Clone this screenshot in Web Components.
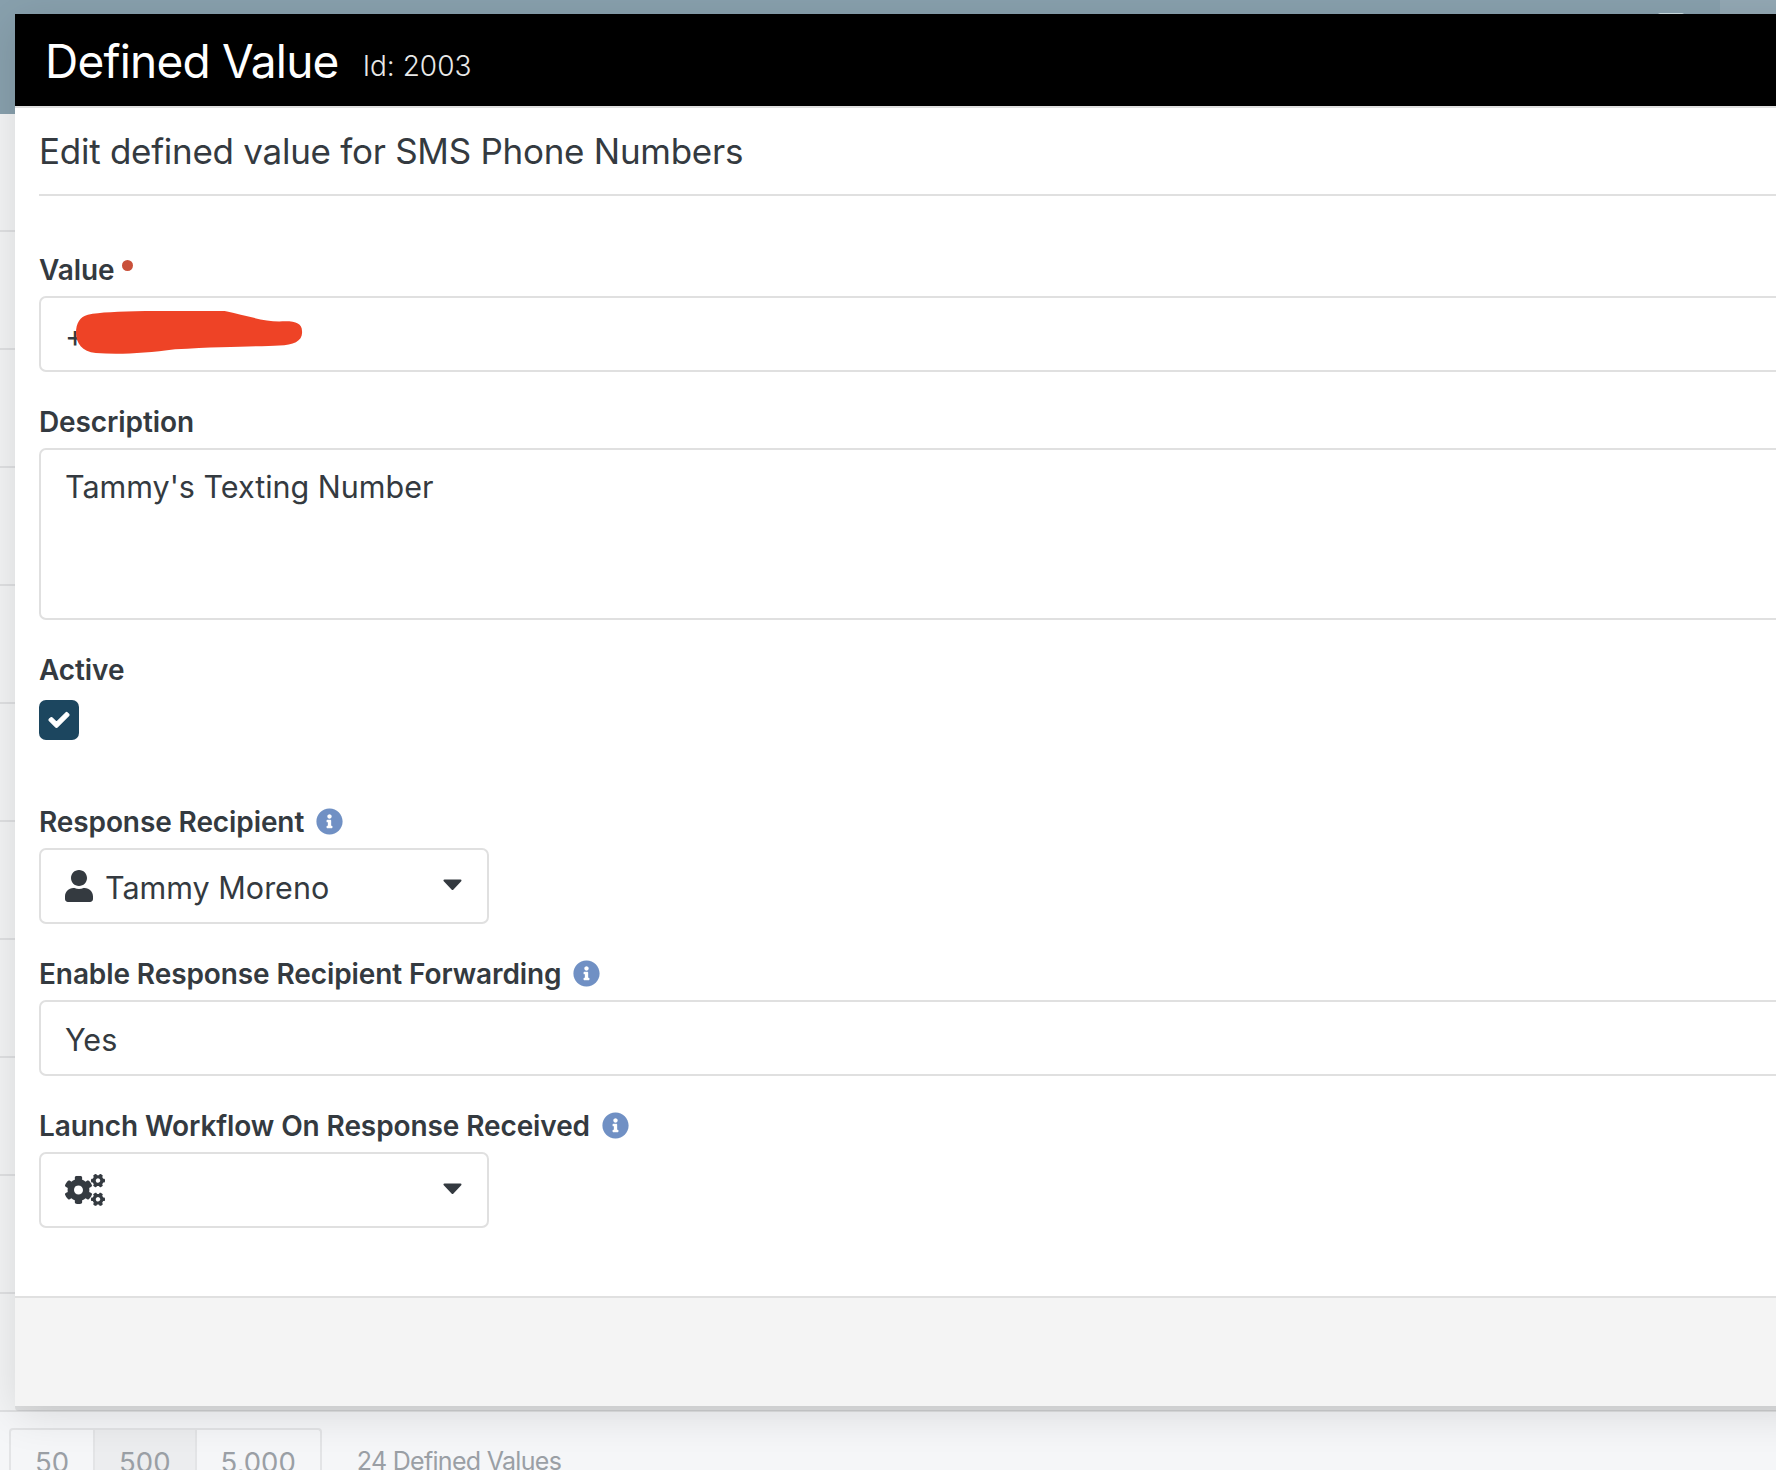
<!DOCTYPE html>
<html>
<head>
<meta charset="utf-8">
<title>Defined Value</title>
<style>
  html, body { margin: 0; padding: 0; background: #f5f6f8; }
  body { width: 1776px; height: 1470px; overflow: hidden; font-family: Inter, "Liberation Sans", sans-serif; color: #343a40; }
</style>
</head>
<body>
<list-backdrop>
  <modal-dialog heading="Defined Value" record-id="Id: 2003" subtitle="Edit defined value for SMS Phone Numbers">
    <form-field label="Value" required>
      <text-box class="redacted">+</text-box>
    </form-field>
    <form-field label="Description">
      <text-box multiline>Tammy's Texting Number</text-box>
    </form-field>
    <form-field label="Active" class="check-field">
      <check-box></check-box>
    </form-field>
    <form-field label="Response Recipient" info>
      <picker-box icon="user">Tammy Moreno</picker-box>
    </form-field>
    <form-field label="Enable Response Recipient Forwarding" info>
      <text-box>Yes</text-box>
    </form-field>
    <form-field label="Launch Workflow On Response Received" info>
      <picker-box icon="cogs"></picker-box>
    </form-field>
  </modal-dialog>
</list-backdrop>

<script>
const ICONS = {
  user: {
    box: "0 0 448 512",
    d: "M224 256c70.7 0 128-57.3 128-128S294.7 0 224 0 96 57.3 96 128s57.3 128 128 128zm89.6 32h-16.7c-22.2 10.2-46.9 16-72.9 16s-50.6-5.8-72.9-16h-16.7C60.2 288 0 348.2 0 422.4V464c0 26.5 21.5 48 48 48h352c26.5 0 48-21.5 48-48v-41.6c0-74.2-60.2-134.4-134.4-134.4z",
  },
  cogs: {
    box: "0 0 640 512",
    d: "M512.1 191l-8.2 14.3c-3 5.3-9.4 7.5-15.1 5.4-11.8-4.4-22.6-10.7-32.1-18.6-4.6-3.8-5.8-10.5-2.8-15.7l8.2-14.3c-6.9-8-12.3-17.3-15.9-27.4h-16.5c-6 0-11.2-4.3-12.2-10.3-2-12-2.1-24.6 0-37.1 1-6 6.2-10.4 12.2-10.4h16.5c3.6-10.1 9-19.4 15.9-27.4l-8.2-14.3c-3-5.2-1.9-11.9 2.8-15.7 9.5-7.9 20.4-14.2 32.1-18.6 5.7-2.1 12.1.1 15.1 5.4l8.2 14.3c10.5-1.9 21.2-1.9 31.7 0L552 6.3c3-5.3 9.4-7.5 15.1-5.4 11.8 4.4 22.6 10.7 32.1 18.6 4.6 3.8 5.8 10.5 2.8 15.7l-8.2 14.3c6.9 8 12.3 17.3 15.9 27.4h16.5c6 0 11.2 4.3 12.2 10.3 2 12 2.1 24.6 0 37.1-1 6-6.2 10.4-12.2 10.4h-16.5c-3.6 10.1-9 19.4-15.9 27.4l8.2 14.3c3 5.2 1.9 11.9-2.8 15.7-9.5 7.9-20.4 14.2-32.1 18.6-5.7 2.1-12.1-.1-15.1-5.4l-8.2-14.3c-10.4 1.9-21.2 1.9-31.7 0zm-10.5-58.8c38.5 29.6 82.4-14.3 52.8-52.8-38.5-29.7-82.4 14.3-52.8 52.8zM386.3 286.1l33.7 16.8c10.1 5.8 14.5 18.1 10.5 29.1-8.9 24.2-26.4 46.4-42.6 65.8-7.4 8.9-20.2 11.1-30.3 5.3l-29.1-16.8c-16 13.7-34.6 24.6-54.9 31.7v33.6c0 11.6-8.3 21.6-19.7 23.6-24.6 4.2-50.4 4.4-75.9 0-11.5-2-20-11.9-20-23.6V418c-20.3-7.2-38.9-18-54.9-31.7L74 403c-10 5.8-22.9 3.6-30.3-5.3-16.2-19.4-33.3-41.6-42.2-65.7-4-10.9.4-23.2 10.5-29.1l33.3-16.8c-3.9-20.9-3.9-42.4 0-63.4L12 205.8c-10.1-5.8-14.6-18.1-10.5-29 8.9-24.2 26-46.4 42.2-65.8 7.4-8.9 20.2-11.1 30.3-5.3l29.1 16.8c16-13.7 34.6-24.6 54.9-31.7V57.1c0-11.5 8.2-21.5 19.6-23.5 24.6-4.2 50.5-4.4 76-.1 11.5 2 20 11.9 20 23.6v33.6c20.3 7.2 38.9 18 54.9 31.7l29.1-16.8c10-5.8 22.9-3.6 30.3 5.3 16.2 19.4 33.2 41.6 42.1 65.8 4 10.9.1 23.2-10 29.1l-33.7 16.8c3.9 21 3.9 42.5 0 63.5zm-117.6 21.1c59.2-77-28.7-164.9-105.7-105.7-59.2 77 28.7 164.9 105.7 105.7zm243.4 182.7l-8.2 14.3c-3 5.3-9.4 7.5-15.1 5.4-11.8-4.4-22.6-10.7-32.1-18.6-4.6-3.8-5.8-10.5-2.8-15.7l8.2-14.3c-6.9-8-12.3-17.3-15.9-27.4h-16.5c-6 0-11.2-4.3-12.2-10.3-2-12-2.1-24.6 0-37.1 1-6 6.2-10.4 12.2-10.4h16.5c3.6-10.1 9-19.4 15.9-27.4l-8.2-14.3c-3-5.2-1.9-11.9 2.8-15.7 9.5-7.9 20.4-14.2 32.1-18.6 5.7-2.1 12.1.1 15.1 5.4l8.2 14.3c10.5-1.9 21.2-1.9 31.7 0l8.2-14.3c3-5.3 9.4-7.5 15.1-5.4 11.8 4.4 22.6 10.7 32.1 18.6 4.6 3.8 5.8 10.5 2.8 15.7l-8.2 14.3c6.9 8 12.3 17.3 15.9 27.4h16.5c6 0 11.2 4.3 12.2 10.3 2 12 2.1 24.6 0 37.1-1 6-6.2 10.4-12.2 10.4h-16.5c-3.6 10.1-9 19.4-15.9 27.4l8.2 14.3c3 5.2 1.9 11.9-2.8 15.7-9.5 7.9-20.4 14.2-32.1 18.6-5.7 2.1-12.1-.1-15.1-5.4l-8.2-14.3c-10.4 1.9-21.2 1.9-31.7 0zM501.6 431c38.5 29.6 82.4-14.3 52.8-52.8-38.5-29.6-82.4 14.3-52.8 52.8z",
  },
  check: {
    box: "0 0 512 512",
    d: "M173.898 439.404l-166.4-166.4c-9.997-9.997-9.997-26.206 0-36.204l36.203-36.204c9.997-9.998 26.207-9.998 36.204 0L192 312.69 432.095 72.596c9.997-9.997 26.207-9.997 36.204 0l36.203 36.204c9.997 9.997 9.997 26.206 0 36.204l-294.4 294.401c-9.998 9.997-26.207 9.997-36.204-.001z",
  },
  info: {
    box: "0 0 512 512",
    d: "M256 8C119.043 8 8 119.083 8 256c0 136.997 111.043 248 248 248s248-111.003 248-248C504 119.083 392.957 8 256 8zm0 110c23.196 0 42 18.804 42 42s-18.804 42-42 42-42-18.804-42-42 18.804-42 42-42zm56 254c0 6.627-5.373 12-12 12h-88c-6.627 0-12-5.373-12-12v-24c0-6.627 5.373-12 12-12h12v-64h-12c-6.627 0-12-5.373-12-12v-24c0-6.627 5.373-12 12-12h64c6.627 0 12 5.373 12 12v100h12c6.627 0 12 5.373 12 12v24z",
  },
};

function iconSvg(name, cls) {
  const ic = ICONS[name];
  return `<svg class="${cls}" viewBox="${ic.box}" xmlns="http://www.w3.org/2000/svg"><path fill="currentColor" stroke="currentColor" d="${ic.d}"/></svg>`;
}

// page behind the dialog: grid rows on the left edge, pager at the bottom
class ListBackdrop extends HTMLElement {
  constructor() {
    super();
    const shadow = this.attachShadow({ mode: "open" });
    const rows = new Array(11).fill('<div class="row"></div>').join("");
    shadow.innerHTML = `
      <style>
        :host { display: block; position: relative; width: 1776px; height: 1470px; overflow: hidden; background: #f5f6f8; }
        .top { height: 114px; display: flex; background: #88a0ad; }
        .top .fill { flex: 1; position: relative; }
        .top .tab { position: absolute; top: 13px; left: 1658px; width: 26px; height: 2px; border-radius: 2px 2px 0 0; background: #cfe0e4; }
        .top .side { width: 56px; height: 14px; background: #93a8b4; }
        .row { height: 116px; border-bottom: 2px solid #dfe0e2; background: #f3f4f5; }
        .pager { display: flex; align-items: flex-start; padding: 16px 0 0 9px; color: #9a9fa5; font-size: 27.5px; }
        .sizes { display: flex; border: 2px solid #e3e4e6; border-bottom: 0; border-radius: 4px 4px 0 0; }
        .sizes span { padding: 15px 24px 0; height: 60px; border-right: 2px solid #e3e4e6; }
        .sizes span:last-child { border-right: 0; }
        .sizes .on { background: rgba(0,0,0,.035); }
        .total { margin: 18px 0 0 35px; font-size: 25px; letter-spacing: -.7px; }
      </style>
      <div class="top"><div class="fill"><div class="tab"></div></div><div class="side"></div></div>
      ${rows}
      <div class="pager">
        <div class="sizes"><span>50</span><span class="on">500</span><span>5,000</span></div>
        <div class="total">24 Defined Values</div>
      </div>
      <slot></slot>`;
  }
}

// overlay dialog, runs off the right side of the window
class ModalDialog extends HTMLElement {
  constructor() {
    super();
    const shadow = this.attachShadow({ mode: "open" });
    shadow.innerHTML = `
      <style>
        :host { display: flex; flex-direction: column; position: absolute; left: 15px; top: 14px; width: 1800px; height: 1392px; background: #fff; border-radius: 0 0 0 4px; box-shadow: 0 5px 0 rgba(0,0,0,.08), 0 8px 44px rgba(0,0,0,.12); }
        header { height: 92px; box-sizing: border-box; padding: 7px 0 0 30px; display: flex; align-items: flex-start; background: #000; color: #fff; }
        h1 { margin: 0; font-size: 46px; font-weight: 400; line-height: 80px; letter-spacing: -.77px; }
        small { margin: 28px 0 0 24px; font-size: 28px; font-weight: 300; color: #e8e8e8; }
        .rule { height: 2px; background: #e0e0e0; }
        .body { flex: 1; padding: 0 0 0 24px; }
        h2 { margin: 0; height: 88px; box-sizing: border-box; padding-top: 21px; font-size: 35px; line-height: 44px; letter-spacing: -.27px; font-weight: 400; color: #343a40; border-bottom: 2px solid #e0e0e0; }
        .fields { padding-top: 55px; }
        footer { height: 108px; background: #f4f4f4; border-top: 2px solid #e0e0e0; }
      </style>
      <header><h1></h1><small></small></header>
      <div class="rule"></div>
      <div class="body">
        <h2></h2>
        <div class="fields"><slot></slot></div>
      </div>
      <footer></footer>`;
    shadow.querySelector("h1").textContent = this.getAttribute("heading");
    shadow.querySelector("small").textContent = this.getAttribute("record-id");
    shadow.querySelector("h2").textContent = this.getAttribute("subtitle");
  }
}

class FormField extends HTMLElement {
  constructor() {
    super();
    const shadow = this.attachShadow({ mode: "open" });
    shadow.innerHTML = `
      <style>
        :host { display: block; margin-bottom: 31px; }
        :host(.check-field) { margin-bottom: 63px; }
        label { display: flex; align-items: center; height: 38px; margin-bottom: 7px; font-size: 28px; font-weight: 600; letter-spacing: -.1px; color: #343a40; white-space: nowrap; }
        .dot { width: 11px; height: 11px; margin: -10px 0 0 8px; border-radius: 50%; background: #c9503a; }
        .info { width: 27px; height: 27px; margin: -2px 0 0 12px; color: #7090c4; }
      </style>
      <label></label>
      <slot></slot>`;
    const label = shadow.querySelector("label");
    label.textContent = this.getAttribute("label");
    if (this.hasAttribute("required")) label.insertAdjacentHTML("beforeend", '<span class="dot"></span>');
    if (this.hasAttribute("info")) label.insertAdjacentHTML("beforeend", iconSvg("info", "info"));
  }
}

class TextBox extends HTMLElement {
  constructor() {
    super();
    const shadow = this.attachShadow({ mode: "open" });
    shadow.innerHTML = `
      <style>
        :host { display: block; position: relative; width: 1800px; height: 76px; box-sizing: border-box; padding: 0 24px; border: 2px solid #e0e0e0; border-radius: 7px; background: #fff; font-size: 30.5px; line-height: 75px; color: #343a40; }
        :host([multiline]) { height: 172px; padding-top: 1px; line-height: 71px; }
        svg { position: absolute; left: 35px; top: 13px; width: 227px; height: 43px; }
      </style>
      <slot></slot>`;
    if (this.classList.contains("redacted")) {
      // red marker scribble from the screenshot
      shadow.innerHTML += `<svg viewBox="0 0 229 45" preserveAspectRatio="none"><path fill="#ee4326" d="M12 4C24 1 42 1 70 0 100-1 122-3 150 0 170 4 188 11 205 11 220 10 228 12 228 21 229 31 220 36 205 36 188 37 150 37 100 40 70 44 45 46 20 44 6 43 0 33 0 23 0 13 4 6 12 4Z"/></svg>`;
    }
  }
}

class PickerBox extends HTMLElement {
  constructor() {
    super();
    const shadow = this.attachShadow({ mode: "open" });
    const icon = this.getAttribute("icon");
    shadow.innerHTML = `
      <style>
        :host { display: flex; align-items: center; width: 450px; height: 76px; box-sizing: border-box; padding: 0 25px 0 24px; border: 2px solid #e0e0e0; border-radius: 7px; background: #fff; font-size: 30.5px; color: #343a40; }
        .ic { flex: none; height: 32px; }
        .ic.user { width: 28px; margin-right: 12px; }
        .ic.cogs { width: 40px; margin-right: 12px; }
        .text { flex: 1; white-space: nowrap; margin-top: 3px; }
        .caret { flex: none; width: 19px; height: 11px; margin-top: -4px; }
      </style>
      ${iconSvg(icon, "ic " + icon)}
      <span class="text"><slot></slot></span>
      <svg class="caret" viewBox="0 0 19 11"><path fill="#343a40" stroke="#343a40" stroke-width="2" stroke-linejoin="round" d="M1.5 1.5h16L9.5 10z"/></svg>`;
  }
}

class CheckBox extends HTMLElement {
  constructor() {
    super();
    const shadow = this.attachShadow({ mode: "open" });
    shadow.innerHTML = `
      <style>
        :host { display: flex; align-items: center; justify-content: center; width: 40px; height: 40px; margin-top: 11px; border-radius: 7px; background: #1c465f; color: #fff; }
        svg { width: 20px; height: 20px; stroke-width: 32px; overflow: visible; }
      </style>
      ${iconSvg("check", "")}`;
  }
}

customElements.define("list-backdrop", ListBackdrop);
customElements.define("modal-dialog", ModalDialog);
customElements.define("form-field", FormField);
customElements.define("text-box", TextBox);
customElements.define("picker-box", PickerBox);
customElements.define("check-box", CheckBox);
</script>
</body>
</html>
